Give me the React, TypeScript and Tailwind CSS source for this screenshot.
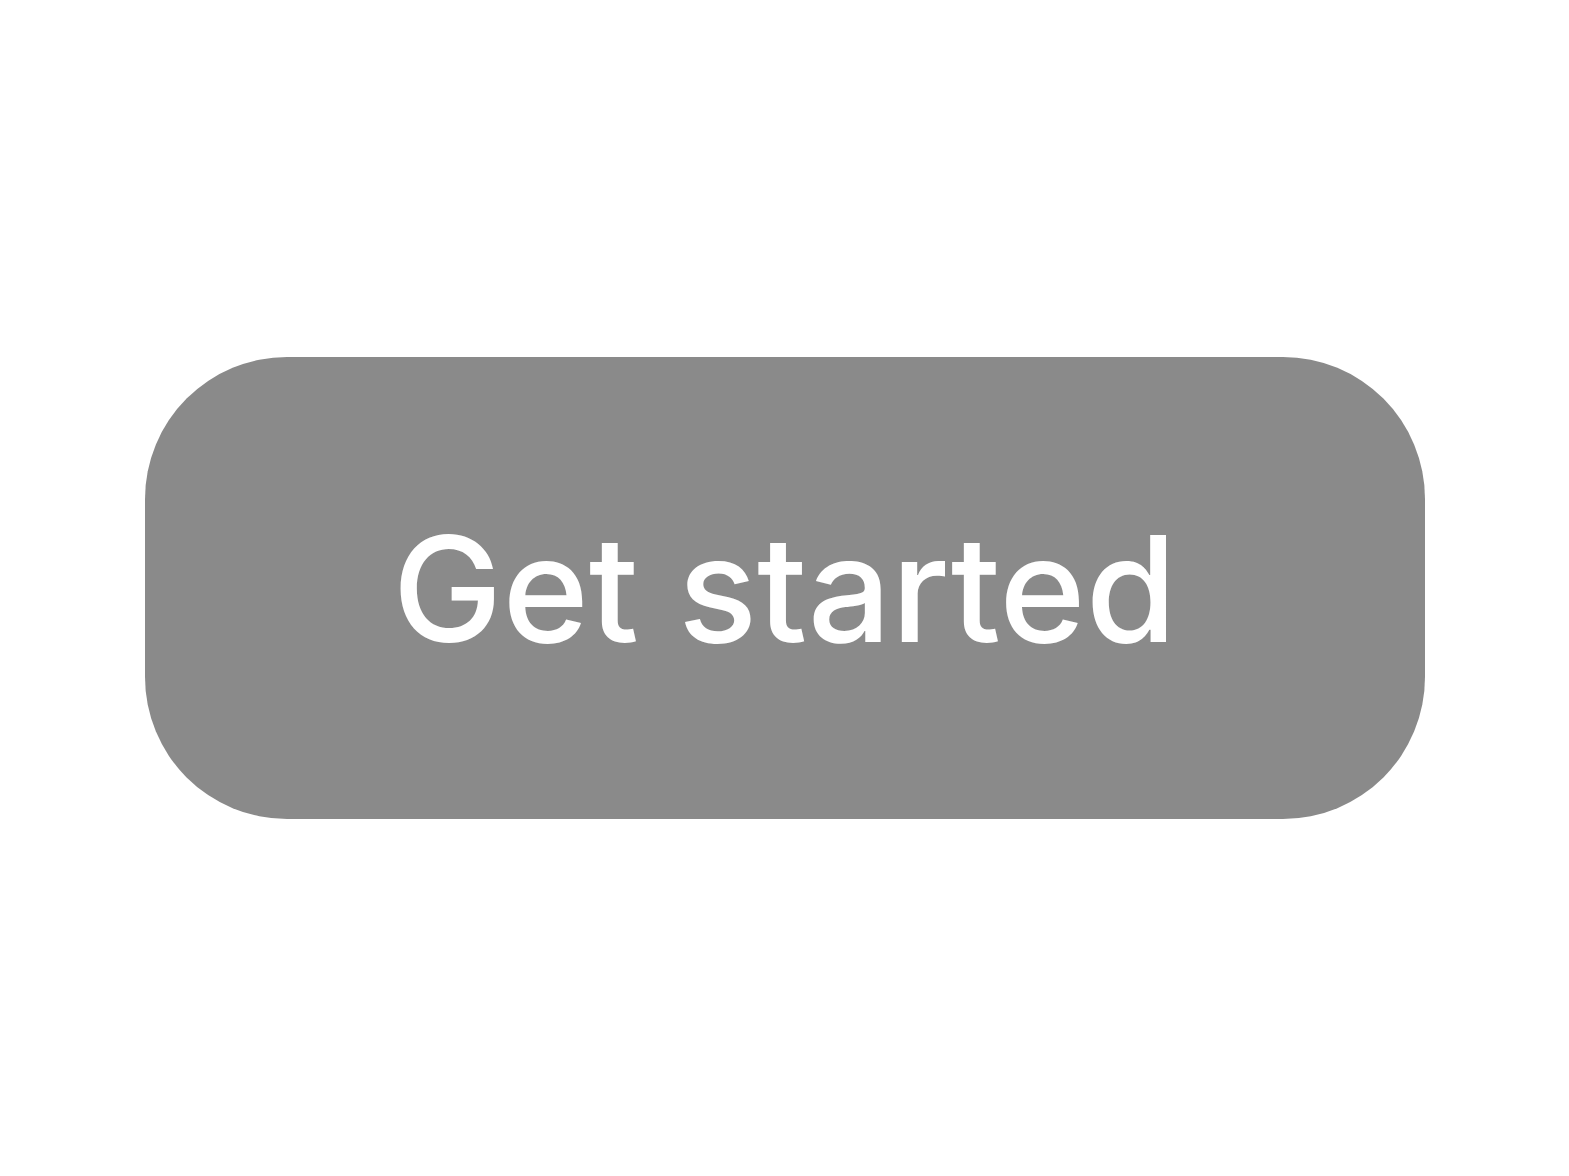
export default function App() {
  return (
    <div className="flex min-h-screen w-full items-center justify-center bg-white">
      <button
        type="button"
        className="flex h-[462px] w-[1280px] items-center justify-center rounded-[142px] bg-[#8a8a8a] pt-[1px] text-[147px] font-medium leading-none text-white"
        style={{ fontFamily: 'Inter, "Noto Sans", sans-serif' }}
      >
        Get started
      </button>
    </div>
  );
}
